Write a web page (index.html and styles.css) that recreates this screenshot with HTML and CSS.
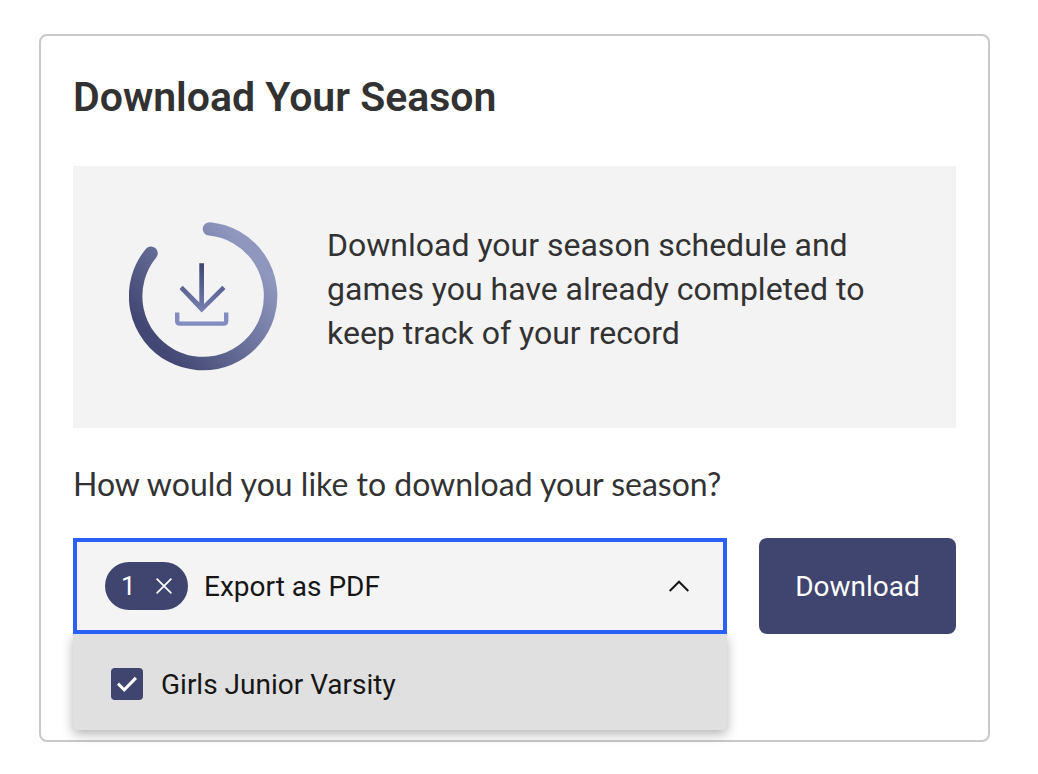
FILE: index.html
```html
<!DOCTYPE html>
<html lang="en">
<head>
<meta charset="utf-8">
<meta name="viewport" content="width=device-width, initial-scale=1">
<title>Download Your Season</title>
<link rel="stylesheet" href="styles.css">
</head>
<body>
<main class="card">
  <h1 class="title">Download Your Season</h1>
  <section class="info">
    <svg class="info-icon" viewBox="0 0 150 150" fill="none" aria-hidden="true">
      <defs>
        <linearGradient id="ring" gradientUnits="userSpaceOnUse" x1="25" y1="117" x2="124" y2="35">
          <stop offset="0" stop-color="#424873"/>
          <stop offset="1" stop-color="#8f97bf"/>
        </linearGradient>
        <linearGradient id="arrow" gradientUnits="userSpaceOnUse" x1="0" y1="42" x2="0" y2="100">
          <stop offset="0" stop-color="#404671"/>
          <stop offset="1" stop-color="#838cc0"/>
        </linearGradient>
      </defs>
      <path d="M80.500 6.900A67.500 67.500 0 1 1 22 31.200" stroke="url(#ring)" stroke-width="13.500" stroke-linecap="round"/>
      <path fill="url(#arrow)" d="M70.300 41.300h4.700V82l18.300-18.300 3.200 3.200L72.650 90.500 50.500 66.900l3.200-3.200L70.300 80.500z"/>
      <path d="M48.200 90.500v8.500q0 2.600 2.600 2.600h43.800q2.600 0 2.600-2.600v-8.500" stroke="#838cc0" stroke-width="4.400"/>
    </svg>
    <p class="info-text">Download your season schedule and games you have already completed to keep track of your record</p>
  </section>
  <label class="question" for="format">How would you like to download your season?</label>
  <div class="actions">
    <div class="picker">
      <div class="field">
        <button class="tag" type="button" aria-label="Clear 1 selected item">
          <span>1</span>
          <svg class="tag-close" viewBox="0 0 16 16" fill="none" stroke="currentColor" stroke-width="1.700" aria-hidden="true"><path d="M0.600 0.600l14.800 14.800M15.400 0.600L0.600 15.400"/></svg>
        </button>
        <select class="format" id="format"><option>Export as PDF</option></select>
        <svg class="chevron" viewBox="0 0 20 12" fill="none" stroke="#161616" stroke-width="2" aria-hidden="true"><path d="M0.700 11l9.300-9.300 9.300 9.300"/></svg>
      </div>
      <div class="menu">
        <label class="option"><input class="check" type="checkbox" checked>Girls Junior Varsity</label>
      </div>
    </div>
    <button class="download" type="button">Download</button>
  </div>
</main>
</body>
</html>
```
FILE: styles.css
```css
* {
  box-sizing: border-box;
}

body {
  margin: 0;
  padding: 34px 48px 32px 39px;
  background: #fff;
  color: #323232;
  font-family: Roboto, "Noto Sans", sans-serif;
}

.card {
  padding: 33px 32px 106px;
  border: 2px solid #c9c9c9;
  border-radius: 8px;
}

.title {
  margin: 0 0 41px;
  font-size: 41px;
  font-weight: 600;
  line-height: 56px;
}

.info {
  display: flex;
  align-items: center;
  gap: 48px;
  padding: 56px;
  background: #f3f3f3;
}

.info-icon {
  flex: none;
  width: 150px;
  height: 150px;
}

.info-text {
  margin: 0;
  padding-bottom: 16px;
  font-size: 32px;
  line-height: 44px;
}

.question {
  display: block;
  margin: 36px 0 34px;
  font-family: Lato, sans-serif;
  font-size: 32px;
  line-height: 40px;
}

.actions {
  display: flex;
  gap: 32px;
}

.picker {
  position: relative;
  flex: 1;
}

.field {
  display: flex;
  align-items: center;
  height: 96px;
  padding: 0 34px 0 28px;
  border: 4px solid #2a60f5;
  background: #f4f4f4;
}

.tag {
  display: flex;
  align-items: center;
  justify-content: space-between;
  width: 83px;
  height: 48px;
  padding: 0 16px;
  border: 0;
  border-radius: 24px;
  background: #3f456e;
  color: #fff;
  font: inherit;
  font-size: 26px;
}

.tag-close {
  width: 16px;
  height: 16px;
}

.format {
  flex: 1;
  min-width: 0;
  margin-left: 16px;
  padding: 0;
  border: 0;
  outline: 0;
  appearance: none;
  background: transparent;
  color: #161616;
  font: inherit;
  font-size: 28px;
}

.chevron {
  width: 20px;
  height: 12px;
}

.menu {
  position: absolute;
  top: 100%;
  left: 0;
  right: 0;
  border-radius: 0 0 4px 4px;
  background: #e0e0e0;
  box-shadow: 0 4px 12px rgba(0, 0, 0, 0.3);
  clip-path: inset(0 -20px -24px -20px);
}

.option {
  display: flex;
  align-items: center;
  gap: 18px;
  height: 96px;
  padding: 4px 38px 0;
  color: #161616;
  font-size: 28px;
}

.check {
  display: grid;
  place-items: center;
  width: 32px;
  height: 32px;
  margin: 0;
  appearance: none;
  border-radius: 4px;
  background: #3f456e;
}

.check:checked::before {
  content: "";
  width: 20px;
  height: 16px;
  background: #fff;
  clip-path: polygon(0 54%, 10% 40%, 36% 73%, 89% 4%, 100% 18%, 36% 100%);
}

.download {
  width: 197px;
  height: 96px;
  padding: 0;
  border: 0;
  border-radius: 8px;
  background: #3f456e;
  color: #fff;
  font: inherit;
  font-size: 28px;
}
```
